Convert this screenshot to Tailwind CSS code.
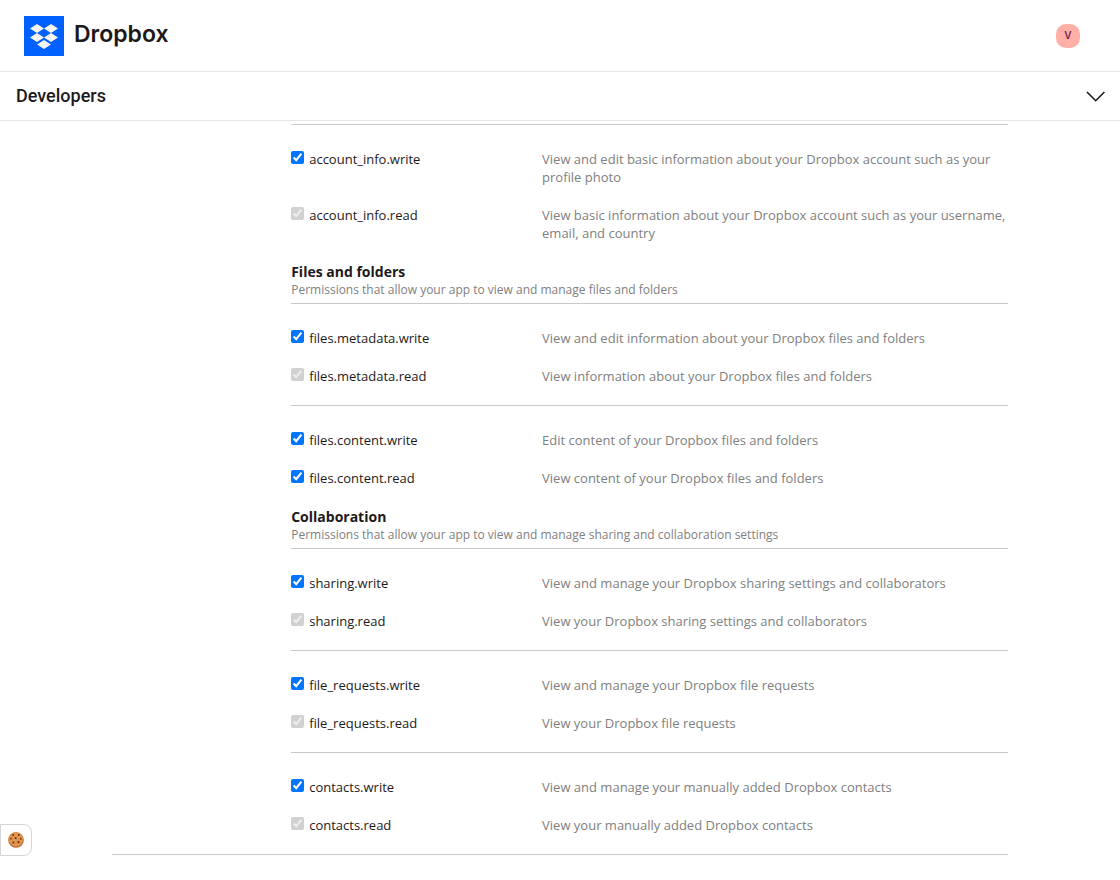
<!DOCTYPE html>
<html lang="en">
  <head>
    <meta charset="UTF-8" />
    <meta name="viewport" content="width=device-width, initial-scale=1.0" />
    <title>Permissions - Dropbox Developers</title>
    <script src="https://cdn.jsdelivr.net/npm/@tailwindcss/browser@4"></script>
  </head>
  <body class="bg-white text-[#1e1919] font-['Open_Sans',sans-serif]">
    <!-- Header -->
    <header class="flex items-center justify-between h-[72px] pl-6 pr-10 border-b border-[#e5e5e3]">
      <a href="#" class="flex items-center gap-[10px]">
        <svg class="size-10" viewBox="0 0 40 40" aria-hidden="true">
          <rect width="40" height="40" fill="#0061fe" />
          <path fill="#f7f5f2" d="M13 8l7 4.5-7 4.5-7-4.5zM27 8l7 4.5-7 4.5-7-4.5zM13 17l7 4.5-7 4.5-7-4.5zM27 17l7 4.5-7 4.5-7-4.5zM20 24l7 4.5-7 4.5-7-4.5z" />
        </svg>
        <span class="pb-1 font-['Inter',sans-serif] text-[23px] leading-8 font-semibold">Dropbox</span>
      </a>
      <button type="button" aria-label="Account" class="size-6 rounded-[10px] bg-[#ffafa5] text-[#7a1f5c] font-['Inter',sans-serif] text-[10px] font-semibold">V</button>
    </header>

    <!-- Section nav -->
    <nav class="flex items-center justify-between h-[49px] px-4 border-b border-[#e5e5e3]">
      <a href="#" class="font-['Roboto',sans-serif] text-lg leading-6 font-medium">Developers</a>
      <button type="button" aria-label="Open menu" class="-mr-1">
        <svg class="w-6 h-6" viewBox="0 0 24 24" fill="none" stroke="#1e1919" stroke-width="1.6" aria-hidden="true">
          <path d="M3 8l8.7 8.7L20.4 8" />
        </svg>
      </button>
    </nav>

    <!-- Permissions -->
    <main class="mx-[10%] pt-[3px] pl-[16%] border-b border-[#c9c9c9] text-[13px] leading-[18px]">
      <section class="border-t border-[#c9c9c9] pt-[15px] pb-[11px]">
        <div class="flex py-[10px]">
          <div class="w-[35%] shrink-0 flex items-start gap-[5px]">
            <input id="account-write" type="checkbox" checked class="size-[13px] mt-px" />
            <label for="account-write">account_info.write</label>
          </div>
          <p class="text-[#808080]">View and edit basic information about your Dropbox account such as your profile photo</p>
        </div>
        <div class="flex py-[10px]">
          <div class="w-[35%] shrink-0 flex items-start gap-[5px]">
            <input id="account-read" type="checkbox" checked disabled class="size-[13px] mt-px" />
            <label for="account-read">account_info.read</label>
          </div>
          <p class="text-[#808080]">View basic information about your Dropbox account such as your username, email, and country</p>
        </div>
      </section>

      <h2 class="text-sm leading-[18px] font-bold">Files and folders</h2>
      <p class="pb-1 text-xs leading-[18px] text-[#808080]">Permissions that allow your app to view and manage files and folders</p>
      <section class="border-t border-[#c9c9c9] pt-[15px] pb-[10px]">
        <div class="flex py-[10px]">
          <div class="w-[35%] shrink-0 flex items-start gap-[5px]">
            <input id="metadata-write" type="checkbox" checked class="size-[13px] mt-px" />
            <label for="metadata-write">files.metadata.write</label>
          </div>
          <p class="text-[#808080]">View and edit information about your Dropbox files and folders</p>
        </div>
        <div class="flex py-[10px]">
          <div class="w-[35%] shrink-0 flex items-start gap-[5px]">
            <input id="metadata-read" type="checkbox" checked disabled class="size-[13px] mt-px" />
            <label for="metadata-read">files.metadata.read</label>
          </div>
          <p class="text-[#808080]">View information about your Dropbox files and folders</p>
        </div>
      </section>
      <section class="border-t border-[#c9c9c9] pt-[15px] pb-[11px]">
        <div class="flex py-[10px]">
          <div class="w-[35%] shrink-0 flex items-start gap-[5px]">
            <input id="content-write" type="checkbox" checked class="size-[13px] mt-px" />
            <label for="content-write">files.content.write</label>
          </div>
          <p class="text-[#808080]">Edit content of your Dropbox files and folders</p>
        </div>
        <div class="flex py-[10px]">
          <div class="w-[35%] shrink-0 flex items-start gap-[5px]">
            <input id="content-read" type="checkbox" checked class="size-[13px] mt-px" />
            <label for="content-read">files.content.read</label>
          </div>
          <p class="text-[#808080]">View content of your Dropbox files and folders</p>
        </div>
      </section>

      <h2 class="text-sm leading-[18px] font-bold">Collaboration</h2>
      <p class="pb-1 text-xs leading-[18px] text-[#808080]">Permissions that allow your app to view and manage sharing and collaboration settings</p>
      <section class="border-t border-[#c9c9c9] pt-[15px] pb-[10px]">
        <div class="flex py-[10px]">
          <div class="w-[35%] shrink-0 flex items-start gap-[5px]">
            <input id="sharing-write" type="checkbox" checked class="size-[13px] mt-px" />
            <label for="sharing-write">sharing.write</label>
          </div>
          <p class="text-[#808080]">View and manage your Dropbox sharing settings and collaborators</p>
        </div>
        <div class="flex py-[10px]">
          <div class="w-[35%] shrink-0 flex items-start gap-[5px]">
            <input id="sharing-read" type="checkbox" checked disabled class="size-[13px] mt-px" />
            <label for="sharing-read">sharing.read</label>
          </div>
          <p class="text-[#808080]">View your Dropbox sharing settings and collaborators</p>
        </div>
      </section>
      <section class="border-t border-[#c9c9c9] pt-[15px] pb-[10px]">
        <div class="flex py-[10px]">
          <div class="w-[35%] shrink-0 flex items-start gap-[5px]">
            <input id="requests-write" type="checkbox" checked class="size-[13px] mt-px" />
            <label for="requests-write">file_requests.write</label>
          </div>
          <p class="text-[#808080]">View and manage your Dropbox file requests</p>
        </div>
        <div class="flex py-[10px]">
          <div class="w-[35%] shrink-0 flex items-start gap-[5px]">
            <input id="requests-read" type="checkbox" checked disabled class="size-[13px] mt-px" />
            <label for="requests-read">file_requests.read</label>
          </div>
          <p class="text-[#808080]">View your Dropbox file requests</p>
        </div>
      </section>
      <section class="border-t border-[#c9c9c9] pt-[15px] pb-[10px]">
        <div class="flex py-[10px]">
          <div class="w-[35%] shrink-0 flex items-start gap-[5px]">
            <input id="contacts-write" type="checkbox" checked class="size-[13px] mt-px" />
            <label for="contacts-write">contacts.write</label>
          </div>
          <p class="text-[#808080]">View and manage your manually added Dropbox contacts</p>
        </div>
        <div class="flex py-[10px]">
          <div class="w-[35%] shrink-0 flex items-start gap-[5px]">
            <input id="contacts-read" type="checkbox" checked disabled class="size-[13px] mt-px" />
            <label for="contacts-read">contacts.read</label>
          </div>
          <p class="text-[#808080]">View your manually added Dropbox contacts</p>
        </div>
      </section>
    </main>

    <!-- Cookie settings -->
    <button type="button" aria-label="Cookie settings" class="fixed left-0 bottom-6 size-8 flex items-center justify-center rounded-r-lg border border-[#d5d5d5] bg-white">
      <svg class="size-4" viewBox="0 0 16 16" aria-hidden="true">
        <circle cx="8" cy="8" r="7.8" fill="#b5652a" />
        <circle cx="7.8" cy="7.4" r="7.2" fill="#e0954c" />
        <g fill="#6b2f1c">
          <circle cx="5.2" cy="3" r=".9" />
          <circle cx="10.8" cy="3" r=".9" />
          <circle cx="7.6" cy="6" r="1" />
          <circle cx="12.8" cy="6.8" r=".9" />
          <circle cx="3" cy="6.6" r=".9" />
          <circle cx="5.4" cy="10.6" r="1" />
          <circle cx="10.4" cy="10.2" r="1.1" />
        </g>
      </svg>
    </button>
  </body>
</html>
